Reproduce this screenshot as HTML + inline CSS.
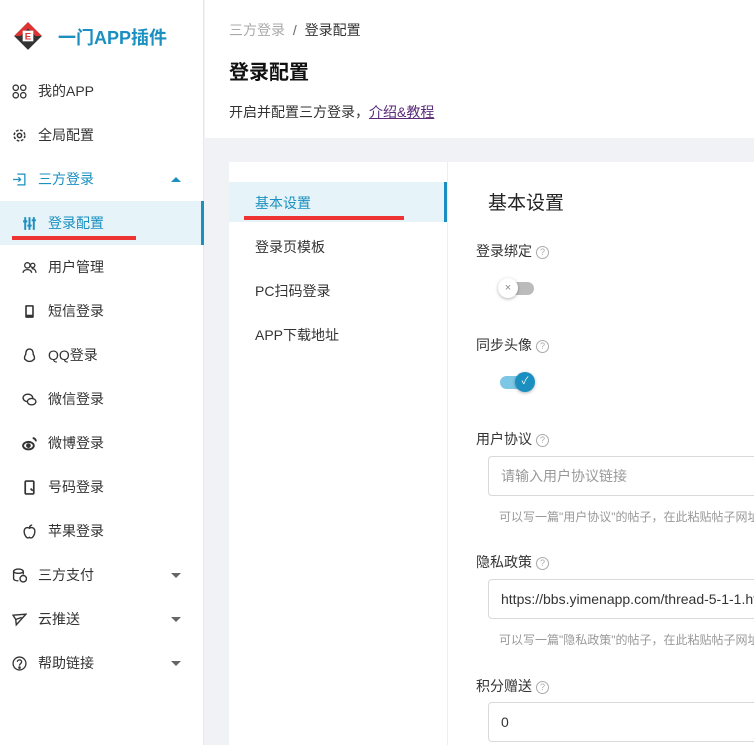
<!DOCTYPE html>
<html><head><meta charset="utf-8"><style>
*{margin:0;padding:0;box-sizing:border-box}
body{width:754px;height:745px;overflow:hidden;background:#f0f2f5;font-family:"Liberation Sans","Noto Sans CJK SC",sans-serif;font-size:14px;color:#333;position:relative}
.a{position:absolute;white-space:nowrap}
.side{left:0;top:0;width:204px;height:745px;background:#fff;border-right:1px solid #e8e8e8}
.mi{position:absolute;left:0;width:204px;height:44px;line-height:44px;font-size:14px;color:#333}
.mi .ic{position:absolute;left:12px;top:15px;width:15px;height:15px}
.mi .t{position:absolute;left:38px}
.sub .ic{left:22px}.sub .t{left:48px}
.car{position:absolute;right:23px;top:20px;border-left:5px solid transparent;border-right:5px solid transparent;border-top:5px solid #666}
.q{display:inline-block;width:13px;height:13px;border:1px solid #aaa;border-radius:50%;font-size:9px;line-height:11px;text-align:center;color:#aaa;vertical-align:middle;margin-left:4px}
.inp{position:absolute;left:488px;width:280px;height:40px;border:1px solid #d9d9d9;border-radius:4px;line-height:38px;padding-left:12px;font-size:14px;white-space:nowrap;overflow:hidden}
.hint{position:absolute;left:499px;font-size:12px;color:#999;white-space:nowrap}
.lab{position:absolute;left:476px;font-size:14px;color:#333;white-space:nowrap}
</style></head><body>
<div class="a side">
  <svg class="a" style="left:12px;top:20px" width="32" height="32" viewBox="0 0 30 30"><path d="M15 2 L28 15 L15 28 L2 15Z" fill="#333"/><path d="M15 2 L28 15 L22 15 L15 8 L8 15 L2 15Z" fill="#d33"/><rect x="10" y="10" width="10" height="10" fill="#fff"/><text x="15" y="18.5" font-size="9" text-anchor="middle" fill="#d33" font-weight="bold">E</text></svg>
  <div class="a" style="left:58px;top:24px;font-size:18px;font-weight:bold;color:#1a8fc0">一门APP插件</div>
  <div class="mi" style="top:69px"><svg class="ic" width="15" height="15" viewBox="0 0 14 14" fill="none" stroke="#333" stroke-width="1.2"><circle cx="3.5" cy="3.5" r="2.5"/><circle cx="10.5" cy="3.5" r="2.5"/><circle cx="3.5" cy="10.5" r="2.5"/><circle cx="10.5" cy="10.5" r="2.5"/></svg><span class="t">我的APP</span></div>
  <div class="mi" style="top:113px"><svg class="ic" width="15" height="15" viewBox="0 0 14 14" fill="none" stroke="#333" stroke-width="1.4"><circle cx="7" cy="7" r="5" stroke-dasharray="2.5 1.5"/><circle cx="7" cy="7" r="2"/></svg><span class="t">全局配置</span></div>
  <div class="mi" style="top:157px;color:#1a8fc0"><svg class="ic" width="15" height="15" viewBox="0 0 14 14" fill="none" stroke="#1a8fc0" stroke-width="1.2"><path d="M5 2H12V12H5M1 7H8M6 5L8 7L6 9"/></svg><span class="t">三方登录</span><span class="car" style="border-top:none;border-bottom:5px solid #1a8fc0"></span></div>
  <div class="mi sub" style="top:201px;background:#e6f4f9;color:#1a8fc0"><svg class="ic" width="15" height="15" viewBox="0 0 14 14" stroke="#1a8fc0" stroke-width="1.8"><path d="M3 1V13M7 1V13M11 1V13M1 5H5M5 9H9M9 4H13"/></svg><span class="t">登录配置</span><div class="a" style="right:0;top:0;width:3px;height:44px;background:#1a8fc0"></div></div>
  <div class="a" style="left:12px;top:236px;width:124px;height:4px;background:#e33"></div>
  <div class="mi sub" style="top:245px"><svg class="ic" width="15" height="15" viewBox="0 0 14 14" fill="none" stroke="#333" stroke-width="1.2"><circle cx="5" cy="5" r="2.5"/><circle cx="10" cy="5" r="2"/><path d="M1 12C1 8 9 8 9 12M9 8C12 8 13 10 13 12"/></svg><span class="t">用户管理</span></div>
  <div class="mi sub" style="top:289px"><svg class="ic" width="15" height="15" viewBox="0 0 14 14"><rect x="3" y="1" width="8" height="12" rx="1" fill="#333"/><rect x="4.5" y="2.5" width="5" height="7.5" fill="#fff"/></svg><span class="t">短信登录</span></div>
  <div class="mi sub" style="top:333px"><svg class="ic" width="15" height="15" viewBox="0 0 14 14" fill="none" stroke="#333" stroke-width="1.3"><path d="M7 1C4 1 3.5 4 3.5 6C2 8 2 11 3.5 11C5 13 9 13 10.5 11C12 11 12 8 10.5 6C10.5 4 10 1 7 1Z"/></svg><span class="t">QQ登录</span></div>
  <div class="mi sub" style="top:377px"><svg class="ic" width="15" height="15" viewBox="0 0 14 14" fill="none" stroke="#333" stroke-width="1.3"><ellipse cx="5.5" cy="5.5" rx="4.5" ry="3.5"/><ellipse cx="9" cy="9" rx="4" ry="3" fill="#fff"/></svg><span class="t">微信登录</span></div>
  <div class="mi sub" style="top:421px"><svg class="ic" width="15" height="15" viewBox="0 0 14 14" fill="none" stroke="#333" stroke-width="1.8"><ellipse cx="6" cy="9" rx="5" ry="3.5"/><circle cx="6" cy="9" r="1.3" fill="#333"/><path d="M10 2A3 3 0 0 1 13 5"/></svg><span class="t">微博登录</span></div>
  <div class="mi sub" style="top:465px"><svg class="ic" width="15" height="15" viewBox="0 0 14 14" fill="none" stroke="#333" stroke-width="1.6"><rect x="3" y="1" width="8" height="12" rx="1"/><path d="M8 8L10 10"/></svg><span class="t">号码登录</span></div>
  <div class="mi sub" style="top:509px"><svg class="ic" width="15" height="15" viewBox="0 0 14 14" fill="none" stroke="#333" stroke-width="1.3"><path d="M7 4C5 2.5 2 3.5 2 7C2 10 4 13 5.5 13C6.5 13 7 12.5 7 12.5C7 12.5 7.5 13 8.5 13C10 13 12 10 12 7C12 3.5 9 2.5 7 4ZM7 4C7 2 8 1 9.5 1"/></svg><span class="t">苹果登录</span></div>
  <div class="mi" style="top:553px"><svg class="ic" width="15" height="15" viewBox="0 0 14 14" fill="none" stroke="#333" stroke-width="1.3"><ellipse cx="6" cy="3" rx="4.5" ry="2"/><path d="M1.5 3V10C1.5 11 3 12 6 12M10.5 3V6"/><circle cx="10.5" cy="10" r="3"/></svg><span class="t">三方支付</span><span class="car"></span></div>
  <div class="mi" style="top:597px"><svg class="ic" width="15" height="15" viewBox="0 0 14 14" fill="none" stroke="#333" stroke-width="1.3"><path d="M1 3L13 2L4 12L3.5 7ZM3.5 7L9 5"/></svg><span class="t">云推送</span><span class="car"></span></div>
  <div class="mi" style="top:641px"><svg class="ic" width="15" height="15" viewBox="0 0 14 14" fill="none" stroke="#333" stroke-width="1.2"><circle cx="7" cy="7" r="6"/><path d="M5 5.5C5 3 9 3 9 5.5C9 7 7 7 7 9"/><circle cx="7" cy="10.8" r=".6" fill="#333"/></svg><span class="t">帮助链接</span><span class="car"></span></div>
</div>
<div class="a" style="left:205px;top:0;width:549px;height:138px;background:#fff"></div>
<div class="a" style="left:229px;top:20px;font-size:14px;color:#aaa">三方登录 <span style="color:#666;margin:0 4px">/</span> <span style="color:#333">登录配置</span></div>
<div class="a" style="left:229px;top:56px;font-size:20px;font-weight:bold;color:#111">登录配置</div>
<div class="a" style="left:229px;top:102px;font-size:14px;color:#333">开启并配置三方登录，<span style="color:#5a2a7a;text-decoration:underline">介绍&amp;教程</span></div>
<div class="a" style="left:229px;top:162px;width:525px;height:583px;background:#fff"></div>
<div class="a" style="left:447px;top:162px;width:1px;height:583px;background:#eee"></div>
<div class="a" style="left:229px;top:182px;width:219px;height:40px;background:#e6f4f9"></div>
<div class="a" style="left:444px;top:182px;width:3px;height:40px;background:#1a8fc0"></div>
<div class="a" style="left:255px;top:193px;color:#1a8fc0">基本设置</div>
<div class="a" style="left:244px;top:216px;width:160px;height:4px;background:#e33"></div>
<div class="a" style="left:255px;top:237px">登录页模板</div>
<div class="a" style="left:255px;top:281px">PC扫码登录</div>
<div class="a" style="left:255px;top:325px">APP下载地址</div>
<div class="a" style="left:488px;top:188px;font-size:19px;color:#222">基本设置</div>
<div class="lab" style="top:241px">登录绑定<span class="q">?</span></div>
<div class="a" style="left:500px;top:282px;width:34px;height:13px;border-radius:7px;background:#bbb"></div>
<div class="a" style="left:498px;top:278px;width:20px;height:20px;border-radius:50%;background:#fff;box-shadow:0 1px 3px rgba(0,0,0,.3);text-align:center;line-height:20px;font-size:11px;color:#888">×</div>
<div class="lab" style="top:335px">同步头像<span class="q">?</span></div>
<div class="a" style="left:500px;top:376px;width:34px;height:13px;border-radius:7px;background:#7cc7e6"></div>
<div class="a" style="left:515px;top:372px;width:20px;height:20px;border-radius:50%;background:#1a8fc0;box-shadow:0 1px 3px rgba(0,0,0,.3);text-align:center;line-height:20px;font-size:10px;color:#fff">✓</div>
<div class="lab" style="top:429px">用户协议<span class="q">?</span></div>
<div class="inp" style="top:456px;color:#999">请输入用户协议链接</div>
<div class="hint" style="top:508px">可以写一篇"用户协议"的帖子，在此粘贴帖子网址</div>
<div class="lab" style="top:552px">隐私政策<span class="q">?</span></div>
<div class="inp" style="top:579px">https://bbs.yimenapp.com/thread-5-1-1.html</div>
<div class="hint" style="top:631px">可以写一篇"隐私政策"的帖子，在此粘贴帖子网址</div>
<div class="lab" style="top:676px">积分赠送<span class="q">?</span></div>
<div class="inp" style="top:702px">0</div>
</body></html>
